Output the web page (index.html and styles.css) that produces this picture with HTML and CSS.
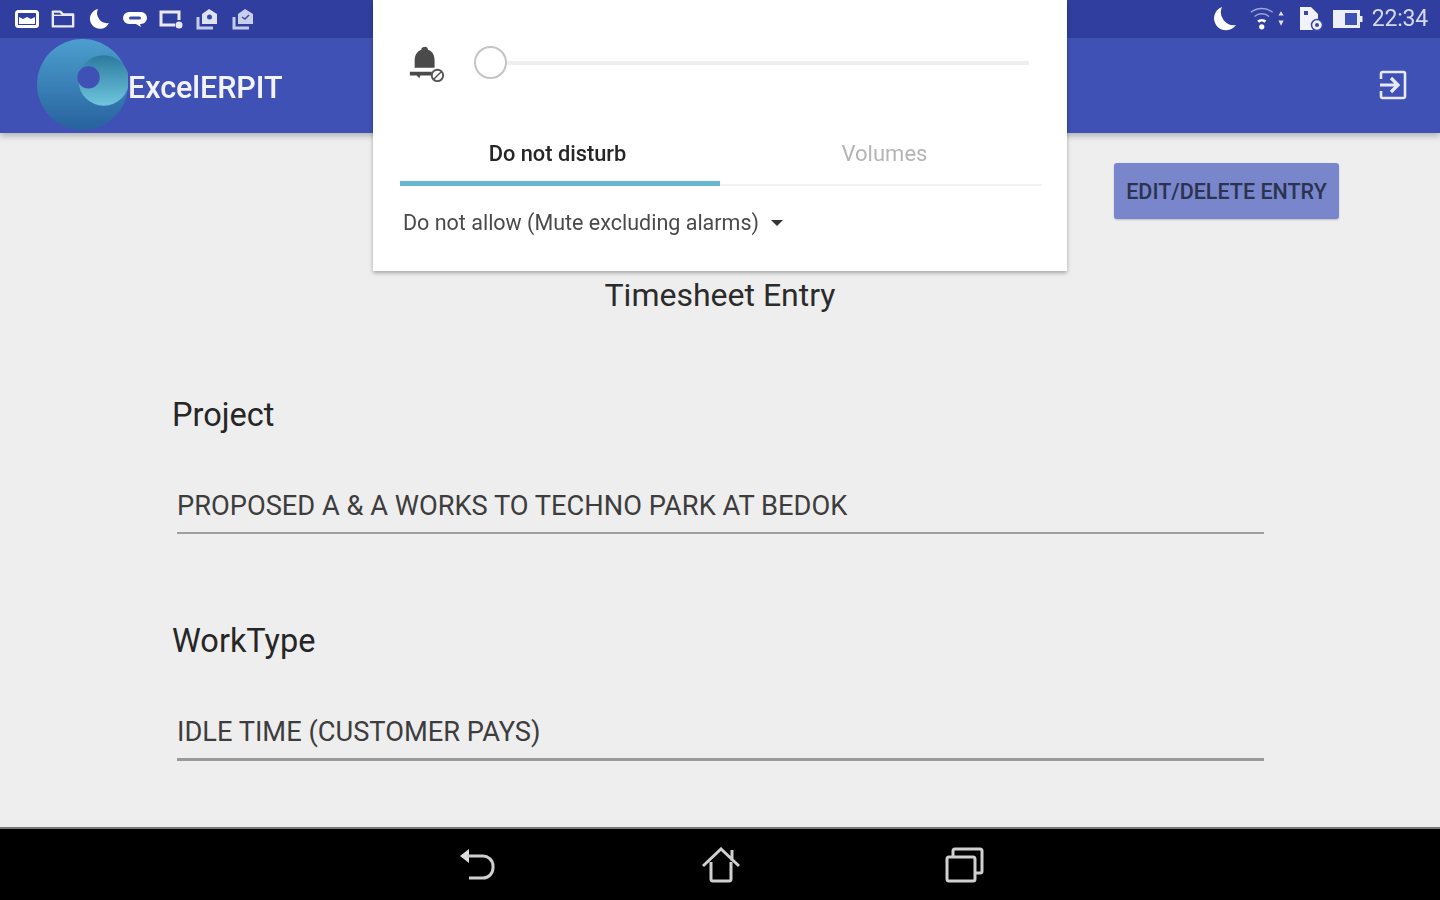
FILE: index.html
```html
<!DOCTYPE html>
<html lang="en">
<head>
<meta charset="utf-8">
<title>ExcelERPIT</title>
<link rel="stylesheet" href="styles.css">
</head>
<body>
<div class="screen">
  <header class="status">
    <div class="status-icons">
      <svg class="si" viewBox="0 0 24 20"><rect x="1.500" y="2.500" width="21" height="15" rx="2" fill="none" stroke="#fff" stroke-width="3"/><path d="M4 8l4 2 4-2 4 2 4-2v7H4z" fill="#fff"/></svg>
      <svg class="si" viewBox="0 0 26 22"><path d="M2 19V3h8l3 3h11v13z" fill="none" stroke="#e8eaf6" stroke-width="2.600" stroke-linejoin="round"/><path d="M2 7h22" stroke="#e8eaf6" stroke-width="1.500"/></svg>
      <svg class="si" viewBox="0 0 22 22"><path d="M10 1a10 10 0 1 0 11 14 10 10 0 0 1-11-14z" fill="#fff"/></svg>
      <svg class="si" viewBox="0 0 24 20"><path d="M6 3h12a6 6 0 0 1 0 12h-1l1 3-5-3H6A6 6 0 0 1 6 3z" fill="#fff"/><rect x="6" y="7.500" width="12" height="3" rx="1.500" fill="#3949ab"/></svg>
      <svg class="si" viewBox="0 0 24 20"><path d="M16 16H2V3h18v8" fill="none" stroke="#e8eaf6" stroke-width="3"/><circle cx="20" cy="16" r="3.500" fill="#e8eaf6"/></svg>
      <svg class="si" viewBox="0 0 24 22"><path d="M3 9v11h15" fill="none" stroke="#c5cae9" stroke-width="3"/><path d="M14 1l8 5v10H7V6z" fill="#dfe2f2"/><circle cx="14.500" cy="9" r="2.500" fill="#3949ab"/></svg>
      <svg class="si" viewBox="0 0 24 22"><path d="M3 9v11h15" fill="none" stroke="#c5cae9" stroke-width="3"/><path d="M14 1l8 5v10H7V6z" fill="#c9cfe8"/><path d="M11 9l3 2 4-4" fill="none" stroke="#3949ab" stroke-width="1.500"/></svg>
    </div>
    <div class="status-right">
      <svg class="moon" viewBox="0 0 26 26"><path d="M11 1a12 12 0 1 0 14 18A13 13 0 0 1 11 1z" fill="#fff"/></svg>
      <svg class="wifi" viewBox="0 0 34 24"><path d="M1 6a17 17 0 0 1 21 0M4.500 10a11 11 0 0 1 14 0" fill="none" stroke="#9fa8da" stroke-width="1.300"/><path d="M7 14a7 7 0 0 1 9 0l-2 2a4 4 0 0 0-5 0z" fill="#fff"/><circle cx="11.500" cy="20" r="2.500" fill="#fff"/><path d="M30 5l2.500 4h-5zM27.500 14h5L30 19z" fill="#dfe2f2"/></svg>
      <svg class="sim" viewBox="0 0 26 26"><path d="M2 1h11l7 7v16H2z" fill="#f1f2fa"/><rect x="6" y="5" width="4" height="4" fill="#3949ab"/><circle cx="19" cy="19" r="5.500" fill="#f1f2fa" stroke="#3949ab" stroke-width="1.500"/><circle cx="19" cy="19" r="2" fill="#3949ab"/></svg>
      <svg class="battery" viewBox="0 0 32 22"><path d="M1 2h27v6h2.500v6H28v6H1z" fill="#eceef8"/><rect x="13" y="5" width="12" height="12" fill="#3f51b5"/></svg>
      <span class="clock">22:34</span>
    </div>
  </header>

  <nav class="appbar">
    <div class="brand">
      <svg class="logo" viewBox="0 0 90 90">
        <defs>
          <linearGradient id="g1" x1="0" y1="0" x2="0" y2="1"><stop offset="0" stop-color="#4c9fce"/><stop offset="1" stop-color="#27629e"/></linearGradient>
          <linearGradient id="g2" x1="0" y1="0" x2="0" y2="1"><stop offset="0" stop-color="#2c7a9f"/><stop offset="1" stop-color="#6fc6de"/></linearGradient>
        </defs>
        <circle cx="45" cy="45" r="45" fill="url(#g1)"/>
        <circle cx="66" cy="41" r="25" fill="url(#g2)"/>
        <circle cx="51" cy="38" r="11" fill="#3f51b5"/>
      </svg>
      <span class="brand-name">ExcelERPIT</span>
    </div>
    <svg class="logout" viewBox="0 0 30 30"><path d="M3 9V3.500A1.500 1.500 0 0 1 4.500 2h21A1.500 1.500 0 0 1 27 3.500v23a1.500 1.500 0 0 1-1.500 1.500h-21A1.500 1.500 0 0 1 3 26.500V21" fill="none" stroke="#e8eaf6" stroke-width="2.600"/><path d="M2 15h16M13 8l7 7-7 7" fill="none" stroke="#e8eaf6" stroke-width="3.200"/></svg>
  </nav>

  <main class="content">
    <div class="actions"><button class="edit-btn">EDIT/DELETE ENTRY</button></div>
    <h1 class="title">Timesheet Entry</h1>
    <section class="field">
      <label class="field-label">Project</label>
      <div class="field-value">PROPOSED A &amp; A WORKS TO TECHNO PARK AT BEDOK</div>
    </section>
    <section class="field">
      <label class="field-label">WorkType</label>
      <div class="field-value field-value-thick">IDLE TIME (CUSTOMER PAYS)</div>
    </section>
  </main>

  <footer class="navbar">
    <svg class="nav-icon" viewBox="0 0 40 36"><path d="M4 9l9-7v14z" fill="#e0e0e0"/><path d="M11 9h15a10 10 0 0 1 11 10v2a10 10 0 0 1-10 10H13" fill="none" stroke="#d0d0d0" stroke-width="3"/></svg>
    <svg class="nav-icon" viewBox="0 0 40 36"><path d="M3 19L21 2l18 17M11 15v17a2 2 0 0 0 2 2h16a2 2 0 0 0 2-2V15M32 3v11" fill="none" stroke="#d0d0d0" stroke-width="3"/></svg>
    <svg class="nav-icon" viewBox="0 0 40 36"><rect x="3" y="10" width="28" height="24" rx="2" fill="none" stroke="#d0d0d0" stroke-width="3"/><path d="M9 9V4a2 2 0 0 1 2-2h25a2 2 0 0 1 2 2v20a2 2 0 0 1-2 2h-4" fill="none" stroke="#d0d0d0" stroke-width="3"/></svg>
  </footer>

  <aside class="dialog">
    <div class="slider-row">
      <svg class="bell" viewBox="0 0 40 40"><path d="M17 1a3 3 0 0 1 4 3c6 2 7 7 7 12v7H7v-7c0-6 2-10 7-12a3 3 0 0 1 3-3z" fill="#4a4a4a"/><path d="M2 27h23v4H13l-1 3-3-3H2z" fill="#4a4a4a"/><circle cx="31" cy="31" r="6" fill="#fff" stroke="#555" stroke-width="2"/><path d="M27 35l8-8" stroke="#555" stroke-width="1.500"/></svg>
      <div class="slider">
        <span class="thumb"></span>
        <span class="track"></span>
      </div>
    </div>
    <div class="tabs">
      <div class="tab tab-active">Do not disturb</div>
      <div class="tab">Volumes</div>
    </div>
    <div class="select"><span>Do not allow (Mute excluding alarms)</span><span class="caret"></span></div>
  </aside>
</div>
</body>
</html>
```
FILE: styles.css
```css
* { box-sizing: border-box; }
html, body { margin: 0; height: 100%; }
body { font-family: Roboto, "Liberation Sans", sans-serif; background: #eeeeee; overflow: hidden; }

.screen { position: relative; width: 1440px; height: 900px; display: flex; flex-direction: column; overflow: hidden; filter: blur(0.6px); }

.status { height: 38px; background: #303f9f; display: flex; justify-content: space-between; align-items: center; padding: 0 12px 0 15px; flex: none; }
.status-icons { display: flex; align-items: center; gap: 12px; margin-top: -1px; }
.si { width: 24px; height: 22px; display: block; }
.status-right { display: flex; align-items: center; margin-top: -1px; }
.moon { width: 26px; height: 26px; }
.wifi { width: 41px; height: 25px; margin-left: 10px; }
.sim { width: 26px; height: 26px; margin-left: 10px; }
.battery { width: 32px; height: 22px; margin-left: 8px; }
.clock { color: #d5d9ee; font-size: 23px; margin-left: 8px; letter-spacing: -0.2px; }

.appbar { height: 95px; background: #3f51b5; display: flex; justify-content: space-between; align-items: center; padding: 0 32px 0 37px; flex: none; box-shadow: 0 3px 6px rgba(0,0,0,.25); position: relative; z-index: 1; }
.brand { display: flex; align-items: center; }
.logo { width: 91px; height: 91px; margin-top: -2px; }
.brand-name { color: #f2f3fb; font-size: 30.600px; font-weight: 500; margin-top: 4px; letter-spacing: -0.1px; }
.logout { width: 30px; height: 30px; margin-top: -2px; }

.content { flex: 1; background: #eeeeee; display: flex; flex-direction: column; position: relative; }
.actions { display: flex; justify-content: flex-end; padding: 30px 101px 0 0; }
.edit-btn { width: 225px; height: 56px; background: #7986cb; border: 0; border-radius: 3px; color: #2a3350; font: 500 21.500px Roboto, sans-serif; letter-spacing: 0; padding: 0; box-shadow: 0 1px 2px rgba(0,0,0,.2); }
.title { margin: 57px 0 0; height: 38px; text-align: center; font-size: 32px; line-height: 38px; font-weight: 400; color: #2b2b2b; }

.field { margin: 82px 176px 0 172px; }
.field + .field { margin-top: 88px; }
.field-label { display: block; font-size: 32.500px; line-height: 38px; color: #262626; }
.field-value { margin: 54px 0 0 5px; height: 46px; font-size: 27.250px; line-height: 36px; color: #3d3d3d; border-bottom: 2px solid #9e9e9e; }
.field-value-thick { height: 47px; border-bottom: 3px solid #9a9a9a; }

.navbar { height: 73px; background: #000; display: flex; justify-content: center; align-items: center; gap: 204px; border-top: 2px solid #777; flex: none; }
.nav-icon { width: 40px; height: 36px; }

.dialog { position: absolute; left: 373px; top: 0; width: 694px; height: 271px; background: #fff; z-index: 2; box-shadow: 0 2px 4px rgba(0,0,0,.3); padding: 44px 24px 0 27px; }
.slider-row { display: flex; align-items: center; height: 38px; }
.bell { width: 38px; height: 38px; margin: 4px 0 0 8px; flex: none; }
.slider { display: flex; align-items: center; margin-left: 28px; flex: 1; }
.thumb { width: 33px; height: 33px; border: 2px solid #c4c4c4; border-radius: 50%; flex: none; margin-top: -2px; }
.track { height: 4px; width: 522px; background: #eeeeee; }
.tabs { display: flex; margin-top: 49px; margin-left: 0; border-bottom: 2px solid #f3f3f3; height: 55px; width: 642px; }
.tab { width: 320px; text-align: center; font-size: 22px; line-height: 46px; color: #b5b5b5; }
.tab + .tab { width: 322px; padding-left: 7px; }
.tab-active { color: #262626; font-size: 21.800px; font-weight: 500; border-bottom: 5px solid #67b5d1; height: 55px; padding-right: 5px; }
.select { margin: 19px 0 0 3px; display: flex; align-items: center; font-size: 21.500px; line-height: 36px; color: #4a4a4a; }
.caret { width: 0; height: 0; border-left: 6px solid transparent; border-right: 6px solid transparent; border-top: 6px solid #333; margin-left: 12px; }
```
